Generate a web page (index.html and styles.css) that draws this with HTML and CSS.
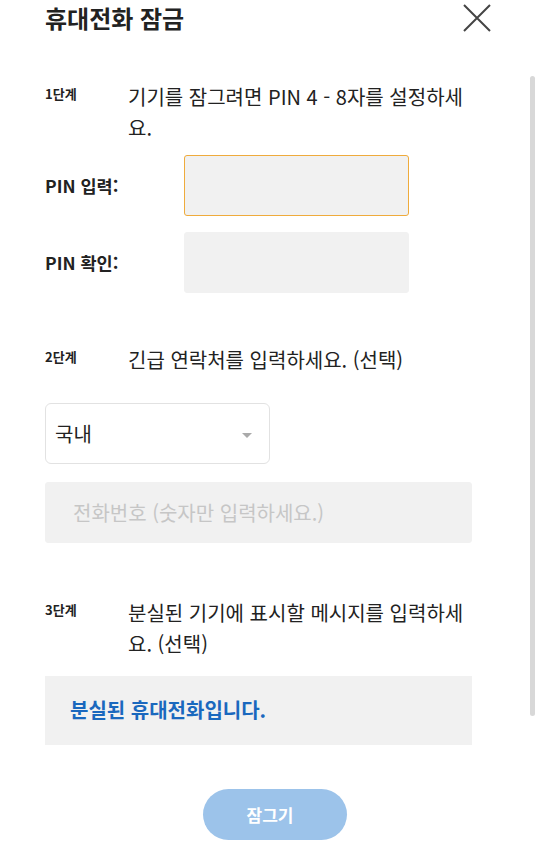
FILE: index.html
```html
<!DOCTYPE html>
<html lang="ko">
<head>
  <meta charset="UTF-8">
  <meta name="viewport" content="width=device-width, initial-scale=1.0">
  <title>휴대전화 잠금</title>
  <link rel="stylesheet" href="styles.css">
</head>
<body>

  <!-- Header -->
  <header class="header">
    <h1 class="title">휴대전화 잠금</h1>
    <button class="close" aria-label="닫기">
      <svg width="28" height="28" viewBox="0 0 28 28">
        <path d="M1 1 L27 27 M27 1 L1 27" stroke="#444" stroke-width="2" fill="none"/>
      </svg>
    </button>
  </header>

  <main class="content">

    <!-- Step 1 -->
    <div class="step">
      <span class="step-num">1단계</span>
      <p class="step-text">기기를 잠그려면 PIN 4 - 8자를 설정하세요.</p>
    </div>

    <div class="pin-rows">
      <div class="pin-row">
        <label for="pin1">PIN 입력:</label>
        <input type="password" id="pin1" class="field focused">
      </div>
      <div class="pin-row">
        <label for="pin2">PIN 확인:</label>
        <input type="password" id="pin2" class="field">
      </div>
    </div>

    <!-- Step 2 -->
    <div class="step step-2">
      <span class="step-num">2단계</span>
      <p class="step-text">긴급 연락처를 입력하세요. (선택)</p>
    </div>

    <div class="select">
      <span>국내</span>
      <span class="arrow"></span>
    </div>

    <input type="text" class="field phone" placeholder="전화번호 (숫자만 입력하세요.)">

    <!-- Step 3 -->
    <div class="step step-3">
      <span class="step-num">3단계</span>
      <p class="step-text">분실된 기기에 표시할 메시지를 입력하세요. (선택)</p>
    </div>

    <div class="message">분실된 휴대전화입니다.</div>

    <div class="actions">
      <button class="lock-btn">잠그기</button>
    </div>
  </main>

  <div class="scroll-thumb"></div>

</body>
</html>
```

FILE: styles.css
```css
body {
  margin: 0;
  padding: 0;
  background: #fff;
  color: #222;
  font-family: "Noto Sans CJK KR", "Noto Sans", sans-serif;
  overflow: hidden;
}

.header {
  display: flex;
  justify-content: space-between;
  align-items: center;
  height: 36px;
  padding: 0 49px 0 45px;
}

.title {
  margin: 0;
  font-size: 24px;
  font-weight: bold;
  line-height: 36px;
  color: #222;
}

.close {
  background: none;
  border: none;
  padding: 0;
  width: 28px;
  height: 28px;
  margin-top: -1px;
  cursor: pointer;
}

.close svg {
  display: block;
}

.content {
  padding: 0 68px 0 45px;
}

/* Steps */
.step {
  display: grid;
  grid-template-columns: 83px 1fr;
  margin-top: 45px;
}

.step-num {
  font-size: 13px;
  font-weight: bold;
  line-height: 25px;
}

.step-text {
  margin: 0;
  font-size: 20px;
  line-height: 31px;
}

.step-2 {
  margin-top: 51px;
}

.step-3 {
  margin-top: 54px;
}

/* PIN fields */
.pin-rows {
  display: flex;
  flex-direction: column;
  gap: 16px;
  margin-top: 12px;
}

.pin-row {
  display: flex;
  align-items: center;
}

.pin-row label {
  width: 139px;
  font-size: 17.5px;
  font-weight: bold;
}

.field {
  box-sizing: border-box;
  height: 61px;
  border: 1px solid #f1f1f1;
  border-radius: 3px;
  background: #f1f1f1;
  outline: none;
  font-family: inherit;
}

.pin-row .field {
  width: 225px;
}

.field.focused {
  border-color: #efab3c;
}

/* Emergency contact */
.select {
  box-sizing: border-box;
  display: flex;
  justify-content: space-between;
  align-items: center;
  width: 225px;
  height: 61px;
  margin-top: 28px;
  padding: 0 17px 0 9px;
  border: 1px solid #e2e2e2;
  border-radius: 6px;
  font-size: 20px;
}

.arrow {
  width: 0;
  height: 0;
  border-left: 5px solid transparent;
  border-right: 5px solid transparent;
  border-top: 5px solid #aaa;
  margin-top: 3px;
}

.phone {
  display: block;
  width: 100%;
  margin-top: 18px;
  padding: 0 27px;
  font-size: 20px;
  color: #222;
}

.phone::placeholder {
  color: #c6c6c6;
}

/* Message */
.message {
  box-sizing: border-box;
  height: 69px;
  margin-top: 17px;
  padding: 20px 25px 0;
  background: #f1f1f1;
  color: #1a68be;
  font-size: 20px;
  font-weight: bold;
  line-height: 28px;
}

.actions {
  display: flex;
  justify-content: center;
  padding-left: 33px;
  margin-top: 44px;
}

.lock-btn {
  width: 144px;
  height: 51px;
  padding: 0 10px 0 0;
  border: none;
  border-radius: 26px;
  background: #9cc3ea;
  color: #fff;
  font-family: inherit;
  font-size: 17px;
  font-weight: bold;
  cursor: pointer;
}

/* Scrollbar thumb over the panel */
.scroll-thumb {
  position: absolute;
  left: 530px;
  top: 76px;
  width: 5px;
  height: 640px;
  border-radius: 3px;
  background: #d8d8d8;
}
```
